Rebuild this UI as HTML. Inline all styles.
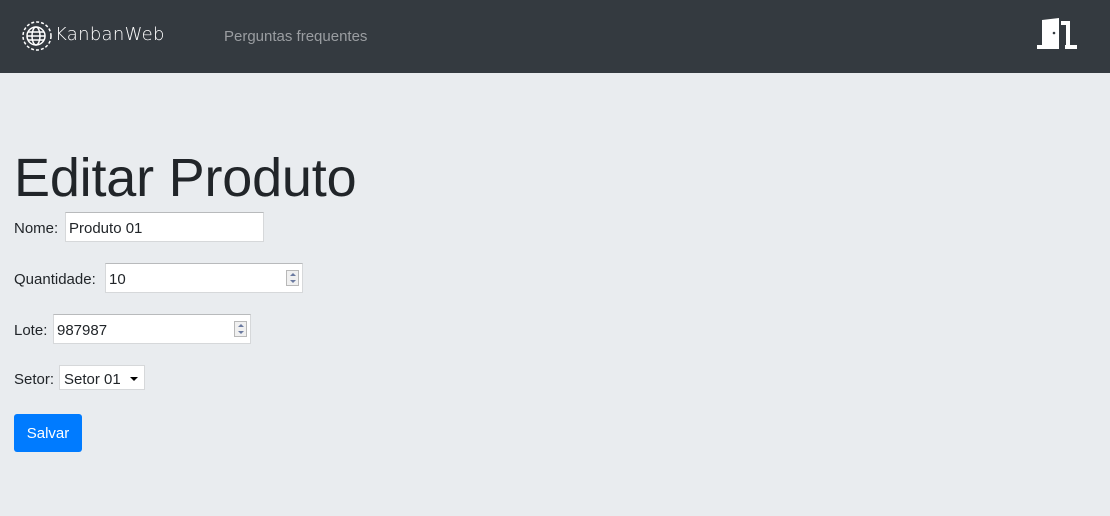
<!DOCTYPE html>
<html><head><style>
body{margin:0;width:1110px;height:516px;background:#e9ecef;font-family:"Liberation Sans",sans-serif;color:#212529;overflow:hidden;position:relative}
.nav{position:absolute;left:0;top:0;width:1110px;height:73px;background:#343a40}
.brand{position:absolute;left:55px;top:24px;color:#fff;font-size:18px;letter-spacing:0.3px;font-family:"DejaVu Sans",sans-serif;font-weight:300}
.link{position:absolute;left:224px;top:28px;color:#9a9da1;font-size:15px}
h1{position:absolute;left:14px;top:147px;margin:0;font-weight:300;font-size:54px;color:#212529;font-family:"Liberation Sans",sans-serif;letter-spacing:-0.2px}
.lbl{position:absolute;font-size:15px}
.in{position:absolute;background:#fff;border:1px solid #d6d8da;border-top-color:#b8babc;box-sizing:border-box;font-size:15px;padding:7px 3px 0}
.spin{position:absolute;right:3px;top:6px;width:13px;height:16px;border:1px solid #b8b8b8;box-sizing:border-box;background:#f0f0f0}
.spin:before{content:"";position:absolute;left:3px;top:2px;border:3px solid transparent;border-bottom:3px solid #6b7aa0;border-top:0}
.spin:after{content:"";position:absolute;left:3px;bottom:2px;border:3px solid transparent;border-top:3px solid #6b7aa0;border-bottom:0}
.btn{position:absolute;left:14px;top:414px;width:68px;height:38px;background:#007bff;color:#fff;border-radius:3px;font-size:15px;text-align:center;line-height:39px}
</style></head><body>
<div class="nav">
<svg style="position:absolute;left:21px;top:20px" width="32" height="32" viewBox="0 0 32 32" fill="none" stroke="#fff" stroke-width="1.5"><circle cx="16" cy="16" r="14" stroke-dasharray="3 2"/><circle cx="15" cy="16" r="9"/><ellipse cx="15" cy="16" rx="4" ry="9"/><line x1="6" y1="16" x2="24" y2="16"/><line x1="7" y1="12" x2="23" y2="12"/><line x1="7" y1="20" x2="23" y2="20"/></svg>
<div class="brand">KanbanWeb</div>
<div class="link">Perguntas frequentes</div>
<svg style="position:absolute;left:1036px;top:17px" width="42" height="32" viewBox="0 0 42 32"><path d="M6 3 L23 1 L23 32 L6 32Z M1 28h6v4h-6z M25 4h9v24h-4v-20h-5z M29 28h12v4h-12z" fill="#fff"/><circle cx="18" cy="16" r="1.3" fill="#343a40"/></svg>
</div>
<h1>Editar Produto</h1>
<div class="lbl" style="left:14px;top:220px">Nome:</div>
<div class="in" style="left:65px;top:212px;width:199px;height:30px">Produto 01</div>
<div class="lbl" style="left:14px;top:271px">Quantidade:</div>
<div class="in" style="left:105px;top:263px;width:198px;height:30px">10<div class="spin"></div></div>
<div class="lbl" style="left:14px;top:322px">Lote:</div>
<div class="in" style="left:53px;top:314px;width:198px;height:30px">987987<div class="spin"></div></div>
<div class="lbl" style="left:14px;top:371px">Setor:</div>
<div class="in" style="left:59px;top:365px;width:86px;height:25px;padding:5px 4px 0;border-color:#d6d8da">Setor 01<span style="position:absolute;right:6px;top:11px;border:4px solid transparent;border-top:4px solid #000;border-bottom:0"></span></div>
<div class="btn">Salvar</div>
</body></html>
